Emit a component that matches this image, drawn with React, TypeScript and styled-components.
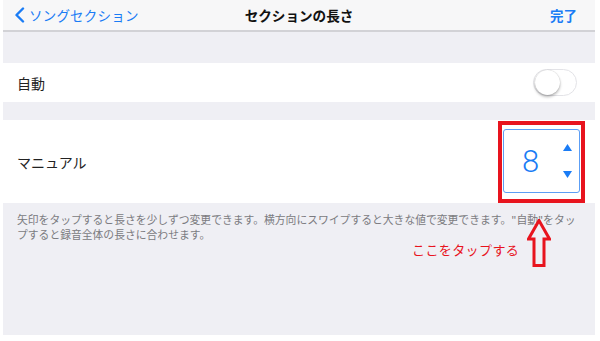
import React from "react";
import styled, { createGlobalStyle } from "styled-components";

const GlobalStyle = createGlobalStyle`
  html, body {
    margin: 0;
    padding: 0;
    background: #ffffff;
  }
  body {
    font-family: "Noto Sans CJK JP", "Noto Sans", sans-serif;
  }
`;

const BLUE = "#1a7cf5";
const RED = "#e8141e";

const Frame = styled.div`
  position: relative;
  width: 592px;
  height: 335px;
  margin-left: 3px;
  background: #efeff4;
  display: flex;
  flex-direction: column;
  overflow: hidden;
`;

const NavBar = styled.header`
  height: 30px;
  flex-shrink: 0;
  display: grid;
  grid-template-columns: 1fr auto 1fr;
  align-items: center;
  background: #f7f7f8;
  border-bottom: 2px solid #d2d2d6;
`;

const BackButton = styled.div`
  display: flex;
  align-items: center;
  gap: 4px;
  padding-left: 11px;
  color: ${BLUE};
  font-size: 13.5px;
  letter-spacing: 0.2px;
`;

const Title = styled.div`
  font-size: 13.6px;
  font-weight: 700;
  color: #111;
`;

const DoneButton = styled.div`
  justify-self: end;
  padding-right: 18px;
  color: ${BLUE};
  font-size: 13.5px;
  font-weight: 700;
`;

const Gap = styled.div<{ $h: number }>`
  height: ${(p) => p.$h}px;
  flex-shrink: 0;
`;

const Row = styled.div<{ $h: number }>`
  height: ${(p) => p.$h}px;
  flex-shrink: 0;
  display: flex;
  align-items: center;
  justify-content: space-between;
  background: #ffffff;
  padding: 0 18px 0 14px;
`;

const Label = styled.span`
  font-size: 14px;
  color: #222;
`;

const Toggle = styled.div`
  width: 44px;
  height: 27px;
  border-radius: 14px;
  border: 1px solid #e3e3e7;
  background: #fff;
  box-sizing: border-box;
  display: flex;
  align-items: center;
  padding: 0 1px;
`;

const Knob = styled.div`
  width: 25px;
  height: 25px;
  border-radius: 50%;
  background: #fff;
  box-shadow: 0 2px 3px rgba(0, 0, 0, 0.28), 0 0 1px rgba(0, 0, 0, 0.25);
`;

const Highlight = styled.div`
  align-self: stretch;
  margin: 1px -8px 0 0;
  width: 87px;
  box-sizing: border-box;
  border: 4px solid ${RED};
  padding: 4px 1px 6px 1px;
  display: flex;
`;

const Stepper = styled.div`
  flex: 1;
  border: 1px solid #5c9ef5;
  border-radius: 3px;
  display: flex;
  align-items: center;
  padding-left: 18px;
  padding-right: 7px;
`;

const Value = styled.span`
  flex: 1;
  font-family: Roboto, "Liberation Sans", sans-serif;
  font-weight: 300;
  font-size: 31px;
  color: ${BLUE};
  line-height: 1;
`;

const Arrows = styled.div`
  display: flex;
  flex-direction: column;
  justify-content: space-between;
  height: 34px;
`;

const Footer = styled.p`
  margin: 0;
  padding: 9px 14px 0 14px;
  font-size: 10.8px;
  line-height: 14.5px;
  color: #7b7b80;
`;

const Annotation = styled.div`
  position: absolute;
  left: 409px;
  top: 219px;
  display: flex;
  align-items: flex-end;
  gap: 8px;
`;

const Note = styled.span`
  font-size: 13px;
  color: ${RED};
  letter-spacing: 0.4px;
  margin-bottom: 8px;
`;

const Tri = ({ up }: { up?: boolean }) => (
  <svg width="9" height="7" viewBox="0 0 9 7">
    <path d={up ? "M4.5 0 L9 7 L0 7 Z" : "M0 0 L9 0 L4.5 7 Z"} fill={BLUE} />
  </svg>
);

export default function App() {
  return (
    <>
      <GlobalStyle />
      <Frame>
        <NavBar>
          <BackButton>
            <svg width="11" height="16" viewBox="0 0 11 16">
              <path d="M9 1.5 L2.5 8 L9 14.5" fill="none" stroke={BLUE} strokeWidth="2.4" strokeLinecap="round" strokeLinejoin="round" />
            </svg>
            ソングセクション
          </BackButton>
          <Title>セクションの長さ</Title>
          <DoneButton>完了</DoneButton>
        </NavBar>
        <Gap $h={31} />
        <Row $h={39}>
          <Label>自動</Label>
          <Toggle>
            <Knob />
          </Toggle>
        </Row>
        <Gap $h={18} />
        <Row $h={83}>
          <Label>マニュアル</Label>
          <Highlight>
            <Stepper>
              <Value>8</Value>
              <Arrows>
                <Tri up />
                <Tri />
              </Arrows>
            </Stepper>
          </Highlight>
        </Row>
        <Footer>
          矢印をタップすると長さを少しずつ変更できます。横方向にスワイプすると大きな値で変更できます。"自動"をタッ
          <br />
          プすると録音全体の長さに合わせます。
        </Footer>
        <Annotation>
          <Note>ここをタップする</Note>
          <svg width="24" height="48" viewBox="0 0 24 48">
            <path d="M12 1.5 L22.5 20 L17 20 L17 46.5 L7 46.5 L7 20 L1.5 20 Z" fill="none" stroke={RED} strokeWidth="3" strokeLinejoin="miter" />
          </svg>
        </Annotation>
      </Frame>
    </>
  );
}
